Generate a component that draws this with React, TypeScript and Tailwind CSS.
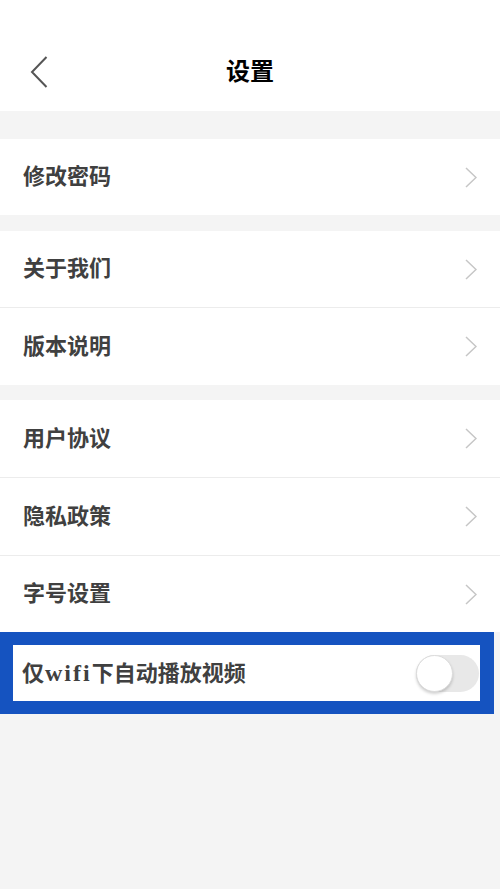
import React from "react";

const font = { fontFamily: '"Liberation Serif", "Noto Sans CJK SC", serif' };

function Chevron() {
  return (
    <svg width="12" height="21" viewBox="0 0 12 21" fill="none" className="shrink-0">
      <path d="M1 1 L11 10.5 L1 20" stroke="#c6c6c6" strokeWidth="1.5" strokeLinejoin="miter" />
    </svg>
  );
}

function Row({ label, h, divider }: { label: string; h: string; divider?: boolean }) {
  return (
    <div className={`flex items-center justify-between bg-white pl-[23px] pr-[23px] ${h} ${divider ? "border-b border-[#ececec]" : ""}`}>
      <span className="text-[22px] font-bold text-[#404040] leading-none" style={font}>{label}</span>
      <Chevron />
    </div>
  );
}

export default function App() {
  return (
    <div className="min-h-[889px] w-[500px] bg-[#f4f4f4] flex flex-col">
      <div className="bg-white h-[111px] pt-[32px]">
        <div className="relative h-[79px] flex items-center justify-center">
          <svg width="18" height="32" viewBox="0 0 18 32" fill="none" className="absolute left-[30px] top-[24px]">
            <path d="M16.5 1 L2 16 L16.5 31" stroke="#555555" strokeWidth="2" />
          </svg>
          <span className="text-[24px] font-bold text-black leading-none" style={font}>设置</span>
        </div>
      </div>
      <div className="h-[28px]" />
      <Row label="修改密码" h="h-[76px]" />
      <div className="h-[16px]" />
      <Row label="关于我们" h="h-[77px]" divider />
      <Row label="版本说明" h="h-[77px]" />
      <div className="h-[15px]" />
      <Row label="用户协议" h="h-[78px]" divider />
      <Row label="隐私政策" h="h-[78px]" divider />
      <Row label="字号设置" h="h-[76px]" />
      <div className="w-[494px] h-[82px] border-[13px] border-r-[14px] border-[#1553c0] bg-white flex items-center justify-between pl-[9px] pr-[1px]">
        <span className="text-[22px] font-bold text-[#404040] leading-none" style={font}>
          仅<span className="text-[24px] tracking-[2px] ml-[1px]">wifi</span>下自动播放视频
        </span>
        <div className="relative w-[63px] h-[37px] rounded-full bg-[#e8e8e8]">
          <div className="absolute left-0 top-0 w-[37px] h-[37px] rounded-full bg-white border border-[#dcdcdc] shadow-[0_2px_3px_rgba(0,0,0,0.18)]" />
        </div>
      </div>
      <div className="flex-1" />
    </div>
  );
}
